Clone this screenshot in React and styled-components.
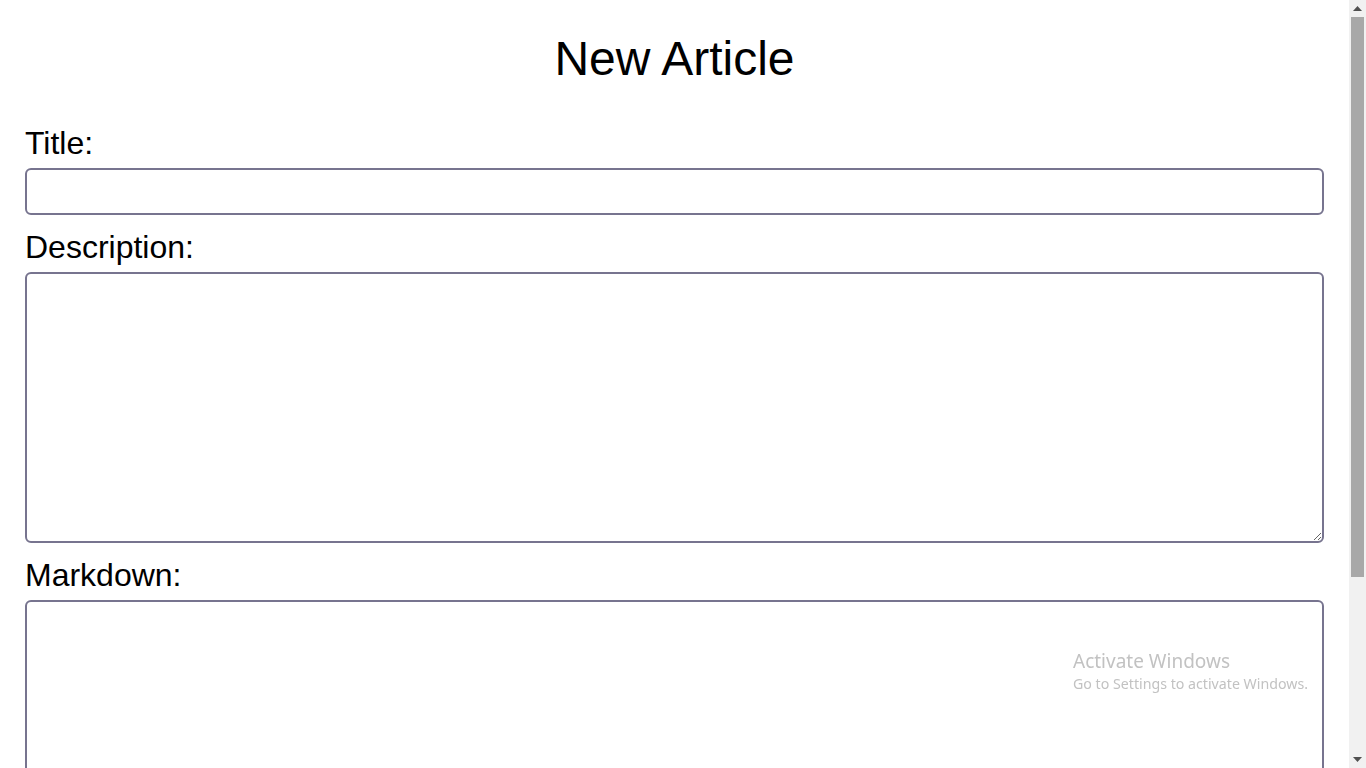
import React from "react";
import styled, { createGlobalStyle } from "styled-components";

const App = () => {
  return (
    <>
      <GlobalStyle />
      <Page>
        <Heading>New Article</Heading>
        <Form onSubmit={(e) => e.preventDefault()}>
          <Label htmlFor="title">Title:</Label>
          <Input id="title" type="text" />
          <Label htmlFor="description">Description:</Label>
          <TextArea id="description" $height={271} />
          <Label htmlFor="markdown">Markdown:</Label>
          <TextArea id="markdown" $height={270} />
        </Form>
      </Page>
      <Scrollbar>
        <ScrollButton>
          <svg width="9" height="5" viewBox="0 0 9 5">
            <path d="M4.5 0 L9 5 L0 5 Z" fill="#505050" />
          </svg>
        </ScrollButton>
        <Track>
          <Thumb />
        </Track>
        <ScrollButton>
          <svg width="9" height="5" viewBox="0 0 9 5">
            <path d="M0 0 L9 0 L4.5 5 Z" fill="#505050" />
          </svg>
        </ScrollButton>
      </Scrollbar>
      <Watermark>
        <WatermarkTitle>Activate Windows</WatermarkTitle>
        <WatermarkText>Go to Settings to activate Windows.</WatermarkText>
      </Watermark>
    </>
  );
};

const GlobalStyle = createGlobalStyle`
  html, body {
    margin: 0;
    padding: 0;
    background: #ffffff;
  }
  body {
    font-family: "Liberation Sans", Arial, sans-serif;
    color: #000000;
  }
`;

const Page = styled.div`
  margin-right: 17px;
  padding: 31px 25px 119px;
`;

const Heading = styled.h1`
  margin: 0 0 39px;
  font-size: 48px;
  font-weight: 400;
  line-height: 55px;
  text-align: center;
`;

const Form = styled.form`
  display: flex;
  flex-direction: column;
`;

const Label = styled.label`
  display: block;
  font-size: 32px;
  line-height: 36px;
  margin-bottom: 7px;
`;

const fieldStyles = `
  display: block;
  width: 100%;
  box-sizing: border-box;
  border: 2px solid #77748f;
  border-radius: 6px;
  background: #ffffff;
  font-family: "Liberation Sans", Arial, sans-serif;
  font-size: 20px;
  margin: 0 0 14px;
  padding: 6px 10px;
  outline: none;
`;

const Input = styled.input`
  ${fieldStyles}
  height: 47px;
`;

const TextArea = styled.textarea`
  ${fieldStyles}
  height: ${(props) => props.$height}px;
  resize: vertical;
`;

const Scrollbar = styled.div`
  position: fixed;
  top: 0;
  right: 0;
  width: 17px;
  height: 100vh;
  background: #f1f1f1;
  display: flex;
  flex-direction: column;
`;

const ScrollButton = styled.div`
  height: 17px;
  flex: none;
  display: flex;
  align-items: center;
  justify-content: center;
`;

const Track = styled.div`
  flex: 1;
  padding: 0 2px;
`;

const Thumb = styled.div`
  height: 560px;
  background: #a8a8a8;
`;

const Watermark = styled.div`
  position: fixed;
  left: 1073px;
  top: 649px;
  font-family: "Noto Sans", "Open Sans", sans-serif;
  color: #c2c2c2;
  pointer-events: none;
`;

const WatermarkTitle = styled.div`
  font-size: 19px;
  line-height: 25px;
`;

const WatermarkText = styled.div`
  font-size: 14.2px;
  line-height: 20px;
`;

export default App;
